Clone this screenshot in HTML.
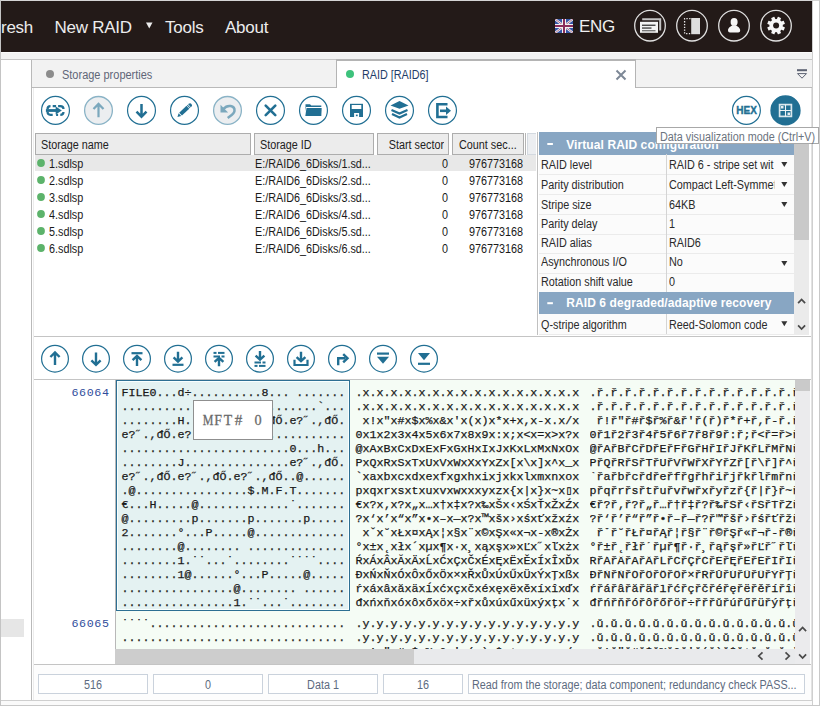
<!DOCTYPE html><html><head><meta charset="utf-8"><style>
html,body{margin:0;padding:0;}
body{width:820px;height:706px;position:relative;overflow:hidden;background:#fff;font-family:"Liberation Sans",sans-serif;}
.t{position:absolute;white-space:pre;line-height:1;}
.r{position:absolute;}
svg{position:absolute;overflow:visible;}
</style></head><body>
<div class="r" style="left:0px;top:0px;width:820px;height:706px;background:#ffffff;"></div>
<div class="r" style="left:1px;top:1px;width:811px;height:51px;background:#231a18;"></div>
<div class="r" style="left:0px;top:0px;width:820px;height:1px;background:#d4d4d4;"></div>
<div class="r" style="left:0px;top:0px;width:1px;height:706px;background:#c4c4c4;"></div>
<div class="r" style="left:1px;top:52px;width:811px;height:7px;background:#f2f2f2;"></div>
<div class="r" style="left:1px;top:52px;width:811px;height:1px;background:#fafafa;"></div>
<div class="r" style="left:1px;top:59px;width:811px;height:1px;background:#c4c4c4;"></div>
<div class="r" style="left:812px;top:0px;width:1px;height:706px;background:#cfcfcf;"></div>
<div class="r" style="left:819px;top:0px;width:1px;height:706px;background:#c8c8c8;"></div>
<div class="t" style="left:1px;top:19.21px;font-size:17px;color:#ececec;font-weight:normal;font-family:'Liberation Sans', sans-serif;letter-spacing:-0.26px;">resh</div>
<div class="t" style="left:54.5px;top:19.21px;font-size:17px;color:#ececec;font-weight:normal;font-family:'Liberation Sans', sans-serif;letter-spacing:-0.26px;">New RAID</div>
<svg style="left:0;top:0" width="820" height="60"><path d="M146,22.5 L152.5,22.5 L149.25,28.5 Z" fill="#ececec"/></svg>
<div class="t" style="left:165px;top:19.21px;font-size:17px;color:#ececec;font-weight:normal;font-family:'Liberation Sans', sans-serif;letter-spacing:-0.26px;">Tools</div>
<div class="t" style="left:225px;top:19.21px;font-size:17px;color:#ececec;font-weight:normal;font-family:'Liberation Sans', sans-serif;letter-spacing:-0.26px;">About</div>
<svg style="left:555px;top:19px;overflow:hidden" width="18" height="14" viewBox="0 0 18 14">
<rect width="18" height="14" fill="#3556a6"/>
<path d="M0,0 L18,14 M18,0 L0,14" stroke="#f2f2f2" stroke-width="2.2"/>
<path d="M0,0 L18,14 M18,0 L0,14" stroke="#8e3a62" stroke-width="0.7"/>
<path d="M9,0 V14 M0,7 H18" stroke="#f2f2f2" stroke-width="4"/>
<path d="M9,0 V14 M0,7 H18" stroke="#8a2d5c" stroke-width="2"/>
</svg>
<div class="t" style="left:579px;top:17.81px;font-size:17px;color:#f0f0f0;font-weight:normal;font-family:'Liberation Sans', sans-serif;letter-spacing:-0.3px;">ENG</div>
<svg style="left:633px;top:9px" width="34" height="34"><circle cx="17" cy="16.7" r="15.3" fill="none" stroke="#e0e0e0" stroke-width="1.3"/></svg>
<svg style="left:675px;top:9px" width="34" height="34"><circle cx="17" cy="16.7" r="15.3" fill="none" stroke="#e0e0e0" stroke-width="1.3"/></svg>
<svg style="left:717px;top:9px" width="34" height="34"><circle cx="17" cy="16.7" r="15.3" fill="none" stroke="#e0e0e0" stroke-width="1.3"/></svg>
<svg style="left:759px;top:9px" width="34" height="34"><circle cx="17" cy="16.7" r="15.3" fill="none" stroke="#e0e0e0" stroke-width="1.3"/></svg>
<svg style="left:634px;top:9px" width="34" height="34">
<path d="M8.2,10.3 H26.2 V21.5" fill="none" stroke="#c4c4c4" stroke-width="2"/>
<rect x="6" y="12.8" width="18" height="11" fill="#f4f4f4"/>
<rect x="8" y="15.6" width="13.5" height="1.3" fill="#3a3a3a"/>
<rect x="8" y="18.4" width="9.5" height="1.3" fill="#3a3a3a"/>
<rect x="8" y="21.2" width="13.5" height="1.1" fill="#5a5a5a"/>
</svg>
<svg style="left:675px;top:9px" width="34" height="34">
<path d="M15.5,9.6 H9.6 V24.6 H15.5" fill="none" stroke="#ececec" stroke-width="1.3" stroke-dasharray="1.3,1.5"/>
<rect x="16.2" y="9" width="8.8" height="16.2" fill="#dedede"/>
</svg>
<svg style="left:717px;top:9px" width="34" height="34">
<ellipse cx="17.1" cy="12.9" rx="3.5" ry="3.9" fill="#f6f6f6"/>
<path d="M11,21.6 C11,18.6 13.6,17.6 15.4,16.2 L18.8,16.2 C20.6,17.6 23.2,18.6 23.2,21.6 Q23.2,23.6 21.2,23.6 H13 Q11,23.6 11,21.6 Z" fill="#f6f6f6"/>
</svg>
<svg style="left:759px;top:9px" width="34" height="34"><g transform="translate(17.1,16.6)"><circle r="6.7" fill="#f6f6f6"/><rect x="-1.75" y="-8.9" width="3.5" height="4" rx="0.4" fill="#f6f6f6" transform="rotate(22.5)"/><rect x="-1.75" y="-8.9" width="3.5" height="4" rx="0.4" fill="#f6f6f6" transform="rotate(67.5)"/><rect x="-1.75" y="-8.9" width="3.5" height="4" rx="0.4" fill="#f6f6f6" transform="rotate(112.5)"/><rect x="-1.75" y="-8.9" width="3.5" height="4" rx="0.4" fill="#f6f6f6" transform="rotate(157.5)"/><rect x="-1.75" y="-8.9" width="3.5" height="4" rx="0.4" fill="#f6f6f6" transform="rotate(202.5)"/><rect x="-1.75" y="-8.9" width="3.5" height="4" rx="0.4" fill="#f6f6f6" transform="rotate(247.5)"/><rect x="-1.75" y="-8.9" width="3.5" height="4" rx="0.4" fill="#f6f6f6" transform="rotate(292.5)"/><rect x="-1.75" y="-8.9" width="3.5" height="4" rx="0.4" fill="#f6f6f6" transform="rotate(337.5)"/><circle r="3.0" fill="#231a18"/></g></svg>
<div class="r" style="left:31px;top:60px;width:1px;height:640px;background:#b9b9b9;"></div>
<div class="r" style="left:33px;top:88px;width:1px;height:612px;background:#ececec;"></div>
<div class="r" style="left:1px;top:619px;width:23px;height:18px;background:#e6e6e6;"></div>
<div class="r" style="left:32px;top:60px;width:780px;height:27px;background:#f2f2f2;"></div>
<div class="r" style="left:32px;top:87px;width:780px;height:1px;background:#b9b9b9;"></div>
<div class="r" style="left:336px;top:59px;width:300px;height:29px;background:#ffffff;"></div>
<div class="r" style="left:336px;top:59px;width:1px;height:29px;background:#b4b4b4;"></div>
<div class="r" style="left:635px;top:59px;width:1px;height:29px;background:#b4b4b4;"></div>
<div class="r" style="left:336px;top:59px;width:300px;height:2px;background:#b4b4b4;"></div>
<svg style="left:0;top:60px" width="820" height="28"><circle cx="50" cy="14" r="4" fill="#8c8c8c"/><circle cx="350" cy="14" r="4" fill="#3dc27c"/><path d="M616.5,10.5 L625.5,19.5 M625.5,10.5 L616.5,19.5" stroke="#7d8896" stroke-width="2"/><rect x="797" y="9.2" width="10" height="2" fill="#5c6272"/><path d="M797.5,13.6 L806.5,13.6 L802,18.2 Z" fill="none" stroke="#5c6272" stroke-width="1"/></svg>
<div class="t" style="top:69.14px;font-size:12px;color:#606678;font-weight:normal;letter-spacing:0px;left:62.3px;transform-origin:0 0;transform:scaleX(0.915);">Storage properties</div>
<div class="t" style="top:69.04px;font-size:12px;color:#1f3d68;font-weight:normal;letter-spacing:0px;left:362.4px;transform-origin:0 0;transform:scaleX(0.9);">RAID [RAID6]</div>
<div class="r" style="left:811px;top:88px;width:1px;height:612px;background:#e2e2e2;"></div>
<svg style="left:0;top:0" width="820" height="706"><circle cx="55.5" cy="110.4" r="13.95" fill="none" stroke="#216f93" stroke-width="1.2"/><circle cx="98.5" cy="110.4" r="13.9" fill="#eceef0" stroke="#8ab3c6" stroke-width="1.3"/><circle cx="141.5" cy="110.4" r="13.95" fill="none" stroke="#216f93" stroke-width="1.2"/><circle cx="184.5" cy="110.4" r="13.95" fill="none" stroke="#216f93" stroke-width="1.2"/><circle cx="227.5" cy="110.4" r="13.9" fill="#eceef0" stroke="#8ab3c6" stroke-width="1.3"/><circle cx="270.5" cy="110.4" r="13.95" fill="none" stroke="#216f93" stroke-width="1.2"/><circle cx="313.5" cy="110.4" r="13.95" fill="none" stroke="#216f93" stroke-width="1.2"/><circle cx="356.5" cy="110.4" r="13.95" fill="none" stroke="#216f93" stroke-width="1.2"/><circle cx="399.5" cy="110.4" r="13.95" fill="none" stroke="#216f93" stroke-width="1.2"/><circle cx="442.5" cy="110.4" r="13.95" fill="none" stroke="#216f93" stroke-width="1.2"/><path d="M47.5,109.2 Q47.5,106.10000000000001 50.5,106.10000000000001 M52.7,106.10000000000001 H56.1 M58.1,106.10000000000001 H60.3 Q63.5,106.10000000000001 63.5,108.9 M63.5,111.9 Q63.5,114.80000000000001 60.3,114.80000000000001 M58.1,114.80000000000001 H56.1 M52.7,114.80000000000001 H50.5 Q47.5,114.80000000000001 47.5,111.80000000000001" fill="none" stroke="#216f93" stroke-width="2.2"/><path d="M45.9,110.5 H57.5" stroke="#216f93" stroke-width="2.8"/><path d="M55.7,106.60000000000001 L61.8,110.5 L55.7,114.4 Z" fill="#216f93"/><path d="M98.5,117.2 V104.2 M93.5,109.10000000000001 L98.5,103.9 L103.5,109.10000000000001" fill="none" stroke="#7ba8bd" stroke-width="2.2"/><path d="M141.5,104.0 V116.4 M136.5,111.7 L141.5,116.7 L146.5,111.7" fill="none" stroke="#216f93" stroke-width="2.5"/><g transform="translate(184.15,110.75) rotate(-43)"><path d="M-9.2,0 L-5.8,-1.9 L-5.8,1.9 Z" fill="#216f93"/><rect x="-4.9" y="-2" width="10" height="4" fill="#216f93"/><rect x="5.7" y="-2" width="1" height="4" fill="#216f93"/><path d="M7.3,-2 H8 A2,2 0 0 1 8,2 H7.3 Z" fill="#216f93"/></g><path d="M223.5,108.9 C227.5,104.10000000000001 235.0,105.4 234.5,110.9 C234.3,113.9 230.5,115.9 227.7,118.0" fill="none" stroke="#7ba8bd" stroke-width="2.5"/><path d="M220.5,104.80000000000001 L220.5,112.5 L228.1,112.5 Z" fill="#7ba8bd"/><path d="M265.7,105.60000000000001 L275.3,115.2 M275.3,105.60000000000001 L265.7,115.2" stroke="#216f93" stroke-width="2.6" stroke-linecap="round"/><path d="M305.5,104.2 H310.0 L311.3,105.60000000000001 H321.3 V107.0 H306.1 L305.5,111.4 Z" fill="#216f93"/><path d="M306.5,108.0 H321.7 L321.3,115.9 H305.3 Z" fill="#216f93"/><path d="M350.0,103.80000000000001 H363.0 V117.0 H350.0 Z" fill="#216f93"/><rect x="351.7" y="105.0" width="9.6" height="4" fill="#fff"/><rect x="354.1" y="113.0" width="5" height="4" fill="#fff"/><rect x="355.9" y="114.60000000000001" width="1.8" height="1.6" fill="#216f93"/><path d="M390.5,105.5 L399.5,101.0 L408.5,105.5 L399.5,108.80000000000001 Z" fill="#216f93"/><path d="M391.5,110.0 L399.5,113.60000000000001 L407.5,110.0" fill="none" stroke="#216f93" stroke-width="2.2"/><path d="M392.0,114.0 L399.5,117.60000000000001 L407.0,114.0" fill="none" stroke="#216f93" stroke-width="2.2"/><path d="M447.5,104.2 H437.4 V117.0 H447.5" fill="none" stroke="#216f93" stroke-width="2.6"/><path d="M440.0,110.80000000000001 H447.5" stroke="#216f93" stroke-width="2.6"/><path d="M446.0,106.60000000000001 L451.0,110.80000000000001 L446.0,115.0 Z" fill="#216f93"/><circle cx="746.4" cy="110.4" r="13.95" fill="none" stroke="#216f93" stroke-width="1.2"/><circle cx="785.5" cy="110.4" r="14.4" fill="#216f93" stroke="#216f93" stroke-width="1.5"/><rect x="779.6" y="104.6" width="11.8" height="11.8" fill="none" stroke="#d9e6ec" stroke-width="1.7"/><path d="M785.5,104.5 V116.5 M779.5,110.5 H791.5" stroke="#eef4f6" stroke-width="1.1"/><rect x="781" y="106" width="2.5" height="2.5" fill="#e6eef2"/><rect x="787.5" y="112.5" width="2.5" height="2.5" fill="#e6eef2"/></svg>
<div class="t" style="left:736.2px;top:106.13px;font-size:10px;color:#216f93;font-weight:bold;font-family:'Liberation Sans', sans-serif;letter-spacing:0.1px;-webkit-text-stroke:0.35px #216f93;">HEX</div>
<div class="r" style="left:35px;top:133px;width:216px;height:22px;background:#ececec;box-sizing:border-box;border:1px solid #adadad;"></div>
<div class="r" style="left:254px;top:133px;width:120px;height:22px;background:#ececec;box-sizing:border-box;border:1px solid #adadad;"></div>
<div class="r" style="left:377px;top:133px;width:72px;height:22px;background:#ececec;box-sizing:border-box;border:1px solid #adadad;"></div>
<div class="r" style="left:452px;top:133px;width:72px;height:22px;background:#ececec;box-sizing:border-box;border:1px solid #adadad;"></div>
<div class="r" style="left:525px;top:133px;width:1px;height:22px;background:#b4b4b4;"></div>
<div class="r" style="left:527px;top:133px;width:9px;height:22px;background:#eceef1;box-sizing:border-box;border:1px solid #d3d9e0;border-right:none;"></div>
<div class="t" style="top:139.04px;font-size:12px;color:#222;font-weight:normal;letter-spacing:0px;left:40.5px;transform-origin:0 0;transform:scaleX(0.9);">Storage name</div>
<div class="t" style="top:139.04px;font-size:12px;color:#222;font-weight:normal;letter-spacing:0px;left:259.5px;transform-origin:0 0;transform:scaleX(0.9);">Storage ID</div>
<div class="t" style="top:139.04px;font-size:12px;color:#222;font-weight:normal;letter-spacing:0px;left:43.5px;width:400px;text-align:right;transform-origin:100% 0;transform:scaleX(0.9);">Start sector</div>
<div class="t" style="top:139.04px;font-size:12px;color:#222;font-weight:normal;letter-spacing:0px;left:458.5px;transform-origin:0 0;transform:scaleX(0.9);">Count sec...</div>
<div class="r" style="left:35px;top:155px;width:501px;height:16px;background:#e8e8e8;"></div>
<div class="t" style="top:158.24px;font-size:12px;color:#1a1a1a;font-weight:normal;letter-spacing:0px;left:49.4px;transform-origin:0 0;transform:scaleX(0.9);">1.sdlsp</div>
<div class="t" style="top:158.24px;font-size:12px;color:#1a1a1a;font-weight:normal;letter-spacing:0px;left:255.4px;transform-origin:0 0;transform:scaleX(0.9);">E:/RAID6_6Disks/1.sd...</div>
<div class="t" style="top:158.24px;font-size:12px;color:#1a1a1a;font-weight:normal;letter-spacing:0px;left:47.5px;width:400px;text-align:right;transform-origin:100% 0;transform:scaleX(0.9);">0</div>
<div class="t" style="top:158.24px;font-size:12px;color:#1a1a1a;font-weight:normal;letter-spacing:0px;left:122.5px;width:400px;text-align:right;transform-origin:100% 0;transform:scaleX(0.9);">976773168</div>
<div class="t" style="top:175.24px;font-size:12px;color:#1a1a1a;font-weight:normal;letter-spacing:0px;left:49.4px;transform-origin:0 0;transform:scaleX(0.9);">2.sdlsp</div>
<div class="t" style="top:175.24px;font-size:12px;color:#1a1a1a;font-weight:normal;letter-spacing:0px;left:255.4px;transform-origin:0 0;transform:scaleX(0.9);">E:/RAID6_6Disks/2.sd...</div>
<div class="t" style="top:175.24px;font-size:12px;color:#1a1a1a;font-weight:normal;letter-spacing:0px;left:47.5px;width:400px;text-align:right;transform-origin:100% 0;transform:scaleX(0.9);">0</div>
<div class="t" style="top:175.24px;font-size:12px;color:#1a1a1a;font-weight:normal;letter-spacing:0px;left:122.5px;width:400px;text-align:right;transform-origin:100% 0;transform:scaleX(0.9);">976773168</div>
<div class="t" style="top:192.24px;font-size:12px;color:#1a1a1a;font-weight:normal;letter-spacing:0px;left:49.4px;transform-origin:0 0;transform:scaleX(0.9);">3.sdlsp</div>
<div class="t" style="top:192.24px;font-size:12px;color:#1a1a1a;font-weight:normal;letter-spacing:0px;left:255.4px;transform-origin:0 0;transform:scaleX(0.9);">E:/RAID6_6Disks/3.sd...</div>
<div class="t" style="top:192.24px;font-size:12px;color:#1a1a1a;font-weight:normal;letter-spacing:0px;left:47.5px;width:400px;text-align:right;transform-origin:100% 0;transform:scaleX(0.9);">0</div>
<div class="t" style="top:192.24px;font-size:12px;color:#1a1a1a;font-weight:normal;letter-spacing:0px;left:122.5px;width:400px;text-align:right;transform-origin:100% 0;transform:scaleX(0.9);">976773168</div>
<div class="t" style="top:209.24px;font-size:12px;color:#1a1a1a;font-weight:normal;letter-spacing:0px;left:49.4px;transform-origin:0 0;transform:scaleX(0.9);">4.sdlsp</div>
<div class="t" style="top:209.24px;font-size:12px;color:#1a1a1a;font-weight:normal;letter-spacing:0px;left:255.4px;transform-origin:0 0;transform:scaleX(0.9);">E:/RAID6_6Disks/4.sd...</div>
<div class="t" style="top:209.24px;font-size:12px;color:#1a1a1a;font-weight:normal;letter-spacing:0px;left:47.5px;width:400px;text-align:right;transform-origin:100% 0;transform:scaleX(0.9);">0</div>
<div class="t" style="top:209.24px;font-size:12px;color:#1a1a1a;font-weight:normal;letter-spacing:0px;left:122.5px;width:400px;text-align:right;transform-origin:100% 0;transform:scaleX(0.9);">976773168</div>
<div class="t" style="top:226.24px;font-size:12px;color:#1a1a1a;font-weight:normal;letter-spacing:0px;left:49.4px;transform-origin:0 0;transform:scaleX(0.9);">5.sdlsp</div>
<div class="t" style="top:226.24px;font-size:12px;color:#1a1a1a;font-weight:normal;letter-spacing:0px;left:255.4px;transform-origin:0 0;transform:scaleX(0.9);">E:/RAID6_6Disks/5.sd...</div>
<div class="t" style="top:226.24px;font-size:12px;color:#1a1a1a;font-weight:normal;letter-spacing:0px;left:47.5px;width:400px;text-align:right;transform-origin:100% 0;transform:scaleX(0.9);">0</div>
<div class="t" style="top:226.24px;font-size:12px;color:#1a1a1a;font-weight:normal;letter-spacing:0px;left:122.5px;width:400px;text-align:right;transform-origin:100% 0;transform:scaleX(0.9);">976773168</div>
<div class="t" style="top:243.24px;font-size:12px;color:#1a1a1a;font-weight:normal;letter-spacing:0px;left:49.4px;transform-origin:0 0;transform:scaleX(0.9);">6.sdlsp</div>
<div class="t" style="top:243.24px;font-size:12px;color:#1a1a1a;font-weight:normal;letter-spacing:0px;left:255.4px;transform-origin:0 0;transform:scaleX(0.9);">E:/RAID6_6Disks/6.sd...</div>
<div class="t" style="top:243.24px;font-size:12px;color:#1a1a1a;font-weight:normal;letter-spacing:0px;left:47.5px;width:400px;text-align:right;transform-origin:100% 0;transform:scaleX(0.9);">0</div>
<div class="t" style="top:243.24px;font-size:12px;color:#1a1a1a;font-weight:normal;letter-spacing:0px;left:122.5px;width:400px;text-align:right;transform-origin:100% 0;transform:scaleX(0.9);">976773168</div>
<svg style="left:0;top:0" width="820" height="706"><circle cx="41" cy="163" r="3.9" fill="#5cb36b"/><circle cx="41" cy="180" r="3.9" fill="#5cb36b"/><circle cx="41" cy="197" r="3.9" fill="#5cb36b"/><circle cx="41" cy="214" r="3.9" fill="#5cb36b"/><circle cx="41" cy="231" r="3.9" fill="#5cb36b"/><circle cx="41" cy="248" r="3.9" fill="#5cb36b"/></svg>
<div class="r" style="left:537px;top:132px;width:1px;height:203px;background:#c0c0c0;"></div>
<div class="r" style="left:539px;top:154px;width:255px;height:180px;background:#fbfbfb;"></div>
<div class="r" style="left:539px;top:132px;width:255px;height:23px;background:#88a6c3;"></div>
<div class="r" style="left:539px;top:292px;width:255px;height:22px;background:#88a6c3;"></div>
<div class="t" style="top:158.94px;font-size:12px;color:#2a2a2a;font-weight:normal;letter-spacing:0px;left:541.3px;transform-origin:0 0;transform:scaleX(0.9);">RAID level</div>
<div class="t" style="top:158.94px;font-size:12px;color:#2a2a2a;font-weight:normal;letter-spacing:0px;left:669.4px;transform-origin:0 0;transform:scaleX(0.9);width:116.67px;overflow:hidden;">RAID 6 - stripe set wit</div>
<svg style="left:0;top:0" width="820" height="706"><path d="M781.3,162 H787.3 L784.3,167 Z" fill="#333"/></svg>
<div class="r" style="left:539px;top:174px;width:255px;height:1px;background:#ebebeb;"></div>
<div class="t" style="top:178.54px;font-size:12px;color:#2a2a2a;font-weight:normal;letter-spacing:0px;left:541.3px;transform-origin:0 0;transform:scaleX(0.9);">Parity distribution</div>
<div class="t" style="top:178.54px;font-size:12px;color:#2a2a2a;font-weight:normal;letter-spacing:0px;left:669.4px;transform-origin:0 0;transform:scaleX(0.9);width:116.67px;overflow:hidden;">Compact Left-Symmet</div>
<svg style="left:0;top:0" width="820" height="706"><path d="M781.3,182 H787.3 L784.3,187 Z" fill="#333"/></svg>
<div class="r" style="left:539px;top:194px;width:255px;height:1px;background:#ebebeb;"></div>
<div class="t" style="top:198.64px;font-size:12px;color:#2a2a2a;font-weight:normal;letter-spacing:0px;left:541.3px;transform-origin:0 0;transform:scaleX(0.9);">Stripe size</div>
<div class="t" style="top:198.64px;font-size:12px;color:#2a2a2a;font-weight:normal;letter-spacing:0px;left:669.4px;transform-origin:0 0;transform:scaleX(0.9);width:116.67px;overflow:hidden;">64KB</div>
<svg style="left:0;top:0" width="820" height="706"><path d="M781.3,202 H787.3 L784.3,207 Z" fill="#333"/></svg>
<div class="r" style="left:539px;top:214px;width:255px;height:1px;background:#ebebeb;"></div>
<div class="t" style="top:217.64px;font-size:12px;color:#2a2a2a;font-weight:normal;letter-spacing:0px;left:541.3px;transform-origin:0 0;transform:scaleX(0.9);">Parity delay</div>
<div class="t" style="top:217.64px;font-size:12px;color:#2a2a2a;font-weight:normal;letter-spacing:0px;left:669.4px;transform-origin:0 0;transform:scaleX(0.9);width:116.67px;overflow:hidden;">1</div>
<div class="r" style="left:539px;top:233.5px;width:255px;height:1px;background:#ebebeb;"></div>
<div class="t" style="top:236.94px;font-size:12px;color:#2a2a2a;font-weight:normal;letter-spacing:0px;left:541.3px;transform-origin:0 0;transform:scaleX(0.9);">RAID alias</div>
<div class="t" style="top:236.94px;font-size:12px;color:#2a2a2a;font-weight:normal;letter-spacing:0px;left:669.4px;transform-origin:0 0;transform:scaleX(0.9);width:116.67px;overflow:hidden;">RAID6</div>
<div class="r" style="left:539px;top:253px;width:255px;height:1px;background:#ebebeb;"></div>
<div class="t" style="top:256.14px;font-size:12px;color:#2a2a2a;font-weight:normal;letter-spacing:0px;left:541.3px;transform-origin:0 0;transform:scaleX(0.9);">Asynchronous I/O</div>
<div class="t" style="top:256.14px;font-size:12px;color:#2a2a2a;font-weight:normal;letter-spacing:0px;left:669.4px;transform-origin:0 0;transform:scaleX(0.9);width:116.67px;overflow:hidden;">No</div>
<svg style="left:0;top:0" width="820" height="706"><path d="M781.3,261 H787.3 L784.3,266 Z" fill="#333"/></svg>
<div class="r" style="left:539px;top:272.5px;width:255px;height:1px;background:#ebebeb;"></div>
<div class="t" style="top:275.64px;font-size:12px;color:#2a2a2a;font-weight:normal;letter-spacing:0px;left:541.3px;transform-origin:0 0;transform:scaleX(0.9);">Rotation shift value</div>
<div class="t" style="top:275.64px;font-size:12px;color:#2a2a2a;font-weight:normal;letter-spacing:0px;left:669.4px;transform-origin:0 0;transform:scaleX(0.9);width:116.67px;overflow:hidden;">0</div>
<div class="r" style="left:539px;top:333.5px;width:255px;height:1px;background:#ebebeb;"></div>
<div class="r" style="left:666px;top:154px;width:1px;height:138px;background:#d4d4d4;"></div>
<div class="r" style="left:666px;top:314px;width:1px;height:20px;background:#d4d4d4;"></div>
<div class="t" style="top:318.54px;font-size:12px;color:#2a2a2a;font-weight:normal;letter-spacing:0px;left:541.3px;transform-origin:0 0;transform:scaleX(0.9);">Q-stripe algorithm</div>
<div class="t" style="top:318.54px;font-size:12px;color:#2a2a2a;font-weight:normal;letter-spacing:0px;left:669.4px;transform-origin:0 0;transform:scaleX(0.9);">Reed-Solomon code</div>
<svg style="left:0;top:0" width="820" height="706"><path d="M781.3,321.3 H787.3 L784.3,326.3 Z" fill="#333"/></svg>
<svg style="left:0;top:0" width="820" height="706"><rect x="547.3" y="143" width="5.6" height="2" fill="#fff"/><rect x="547.3" y="302.2" width="5.6" height="2" fill="#fff"/></svg>
<div class="t" style="top:138.94px;font-size:12px;color:#ffffff;font-weight:bold;letter-spacing:0.1px;left:566.2px;transform-origin:0 0;transform:scaleX(1.0);">Virtual RAID configuration</div>
<div class="t" style="top:297.04px;font-size:12px;color:#ffffff;font-weight:bold;letter-spacing:0.1px;left:566.2px;transform-origin:0 0;transform:scaleX(1.0);">RAID 6 degraded/adaptive recovery</div>
<div class="r" style="left:794px;top:132px;width:15px;height:202.5px;background:#ebebeb;"></div>
<div class="r" style="left:794px;top:132px;width:15px;height:107.5px;background:#c9c9c9;"></div>
<svg style="left:0;top:0" width="820" height="706"><path d="M798.1,303.2 L801.6,299.4 L805.1,303.2 M798.1,325.3 L801.6,329.1 L805.1,325.3" fill="none" stroke="#4a4a4a" stroke-width="1.7"/></svg>
<div class="r" style="left:34px;top:336px;width:777px;height:1px;background:#c4c4c4;"></div>
<svg style="left:0;top:0" width="820" height="706"><circle cx="55" cy="358.7" r="13.4" fill="none" stroke="#216f93" stroke-width="1.2"/><circle cx="96" cy="358.7" r="13.4" fill="none" stroke="#216f93" stroke-width="1.2"/><circle cx="137" cy="358.7" r="13.4" fill="none" stroke="#216f93" stroke-width="1.2"/><circle cx="178" cy="358.7" r="13.4" fill="none" stroke="#216f93" stroke-width="1.2"/><circle cx="219" cy="358.7" r="13.4" fill="none" stroke="#216f93" stroke-width="1.2"/><circle cx="260" cy="358.7" r="13.4" fill="none" stroke="#216f93" stroke-width="1.2"/><circle cx="301" cy="358.7" r="13.4" fill="none" stroke="#216f93" stroke-width="1.2"/><circle cx="342" cy="358.7" r="13.4" fill="none" stroke="#216f93" stroke-width="1.2"/><circle cx="383" cy="358.7" r="13.4" fill="none" stroke="#216f93" stroke-width="1.2"/><circle cx="424" cy="358.7" r="13.4" fill="none" stroke="#216f93" stroke-width="1.2"/><path d="M55,364.9 V353.4 M50.4,357.0 L55,352.4 L59.6,357.0" fill="none" stroke="#216f93" stroke-width="2.4"/><path d="M96,352.4 V363.9 M91.4,360.29999999999995 L96,364.9 L100.6,360.29999999999995" fill="none" stroke="#216f93" stroke-width="2.4"/><rect x="131.5" y="352.09999999999997" width="11" height="2.2" fill="#216f93"/><path d="M137,366.0 V356.9 M132.6,360.09999999999997 L137,355.9 L141.4,360.09999999999997" fill="none" stroke="#216f93" stroke-width="2.4"/><path d="M178,351.7 V360.5 M173.6,357.3 L178,361.5 L182.4,357.3" fill="none" stroke="#216f93" stroke-width="2.4"/><rect x="172.5" y="363.7" width="11" height="2.2" fill="#216f93"/><rect x="213.5" y="351.9" width="3" height="2" fill="#216f93"/><rect x="218" y="351.9" width="6.5" height="2" fill="#216f93"/><rect x="213.5" y="355.5" width="6.5" height="2" fill="#216f93"/><rect x="221.5" y="355.5" width="3" height="2" fill="#216f93"/><path d="M219,366.3 V358.9 M214.6,361.9 L219,357.9 L223.4,361.9" fill="none" stroke="#216f93" stroke-width="2.4"/><path d="M260,350.9 V358.7 M255.6,355.7 L260,359.7 L264.4,355.7" fill="none" stroke="#216f93" stroke-width="2.4"/><rect x="254.5" y="361.5" width="6.5" height="2" fill="#216f93"/><rect x="262.5" y="361.5" width="3" height="2" fill="#216f93"/><rect x="254.5" y="364.9" width="3" height="2" fill="#216f93"/><rect x="259" y="364.9" width="6.5" height="2" fill="#216f93"/><path d="M301,351.7 V360.2 M296.6,357.2 L301,361.2 L305.4,357.2" fill="none" stroke="#216f93" stroke-width="2.4"/><path d="M294.5,359.7 V365.0 H307.5 V359.7" fill="none" stroke="#216f93" stroke-width="2.2"/><path d="M338.2,365.2 V358.2 H345.5" fill="none" stroke="#216f93" stroke-width="2.4"/><path d="M343.2,354.09999999999997 L347.5,358.2 L343.2,362.3" fill="none" stroke="#216f93" stroke-width="2.4"/><rect x="377" y="352.5" width="12" height="2.2" fill="#216f93"/><path d="M377,356.7 H389 L383,363.7 Z" fill="#216f93"/><path d="M418,353.09999999999997 H430 L424,360.3 Z" fill="#216f93"/><rect x="418" y="362.7" width="12" height="2.2" fill="#216f93"/></svg>
<div class="r" style="left:34px;top:379px;width:777px;height:1px;background:#c4c4c4;"></div>
<div class="r" style="left:115px;top:380px;width:680px;height:269px;background:#f5fcf5;"></div>
<div class="r" style="left:115px;top:380px;width:1px;height:269px;background:#b8b8b8;"></div>
<div class="r" style="left:116px;top:380px;width:234px;height:231px;background:#e4f2f2;box-sizing:border-box;border:1px solid #2d6f93;box-shadow:inset 1px 1px 0 #f8ffff, inset -1px -1px 0 #f8ffff;"></div>
<div class="t" style="left:121.5px;top:387.55px;font-size:11.67px;color:#1a1a1a;font-family:'Liberation Mono', monospace;font-weight:normal;-webkit-text-stroke:0.25px #1a1a1a;">FILE0...d÷..........8... .......</div>
<div class="t" style="left:355.5px;top:387.55px;font-size:11.67px;color:#1a1a1a;font-family:'Liberation Mono', monospace;font-weight:normal;-webkit-text-stroke:0.25px #1a1a1a;">.x.x.x.x.x.x.x.x.x.x.x.x.x.x.x.x</div>
<div class="t" style="left:589.5px;top:387.55px;font-size:11.67px;color:#1a1a1a;font-family:'Liberation Mono', monospace;font-weight:normal;-webkit-text-stroke:0.25px #1a1a1a;width:205.5px;overflow:hidden;">.ř.ř.ř.ř.ř.ř.ř.ř.ř.ř.ř.ř.ř.ř.ř.ř</div>
<div class="t" style="left:121.5px;top:401.55px;font-size:11.67px;color:#1a1a1a;font-family:'Liberation Mono', monospace;font-weight:normal;-webkit-text-stroke:0.25px #1a1a1a;">............................`...</div>
<div class="t" style="left:355.5px;top:401.55px;font-size:11.67px;color:#1a1a1a;font-family:'Liberation Mono', monospace;font-weight:normal;-webkit-text-stroke:0.25px #1a1a1a;">.x.x.x.x.x.x.x.x.x.x.x.x.x.x.x.x</div>
<div class="t" style="left:589.5px;top:401.55px;font-size:11.67px;color:#1a1a1a;font-family:'Liberation Mono', monospace;font-weight:normal;-webkit-text-stroke:0.25px #1a1a1a;width:205.5px;overflow:hidden;">.ř.ř.ř.ř.ř.ř.ř.ř.ř.ř.ř.ř.ř.ř.ř.ř</div>
<div class="t" style="left:121.5px;top:415.55px;font-size:11.67px;color:#1a1a1a;font-family:'Liberation Mono', monospace;font-weight:normal;-webkit-text-stroke:0.25px #1a1a1a;">........H............đŐ.e?˝.,đŐ.</div>
<div class="t" style="left:355.5px;top:415.55px;font-size:11.67px;color:#1a1a1a;font-family:'Liberation Mono', monospace;font-weight:normal;-webkit-text-stroke:0.25px #1a1a1a;"> x!x&quot;x#x$x%x&amp;x&#x27;x(x)x*x+x,x-x.x/x</div>
<div class="t" style="left:589.5px;top:415.55px;font-size:11.67px;color:#1a1a1a;font-family:'Liberation Mono', monospace;font-weight:normal;-webkit-text-stroke:0.25px #1a1a1a;width:205.5px;overflow:hidden;"> ř!ř&quot;ř#ř$ř%ř&amp;ř&#x27;ř(ř)ř*ř+ř,ř-ř.ř/ř</div>
<div class="t" style="left:121.5px;top:429.55px;font-size:11.67px;color:#1a1a1a;font-family:'Liberation Mono', monospace;font-weight:normal;-webkit-text-stroke:0.25px #1a1a1a;">e?˝.,đŐ.e?......................</div>
<div class="t" style="left:355.5px;top:429.55px;font-size:11.67px;color:#1a1a1a;font-family:'Liberation Mono', monospace;font-weight:normal;-webkit-text-stroke:0.25px #1a1a1a;">0x1x2x3x4x5x6x7x8x9x:x;x&lt;x=x&gt;x?x</div>
<div class="t" style="left:589.5px;top:429.55px;font-size:11.67px;color:#1a1a1a;font-family:'Liberation Mono', monospace;font-weight:normal;-webkit-text-stroke:0.25px #1a1a1a;width:205.5px;overflow:hidden;">0ř1ř2ř3ř4ř5ř6ř7ř8ř9ř:ř;ř&lt;ř=ř&gt;ř?ř</div>
<div class="t" style="left:121.5px;top:443.55px;font-size:11.67px;color:#1a1a1a;font-family:'Liberation Mono', monospace;font-weight:normal;-webkit-text-stroke:0.25px #1a1a1a;">........................0...h...</div>
<div class="t" style="left:355.5px;top:443.55px;font-size:11.67px;color:#1a1a1a;font-family:'Liberation Mono', monospace;font-weight:normal;-webkit-text-stroke:0.25px #1a1a1a;">@xAxBxCxDxExFxGxHxIxJxKxLxMxNxOx</div>
<div class="t" style="left:589.5px;top:443.55px;font-size:11.67px;color:#1a1a1a;font-family:'Liberation Mono', monospace;font-weight:normal;-webkit-text-stroke:0.25px #1a1a1a;width:205.5px;overflow:hidden;">@řAřBřCřDřEřFřGřHřIřJřKřLřMřNřOř</div>
<div class="t" style="left:121.5px;top:457.55px;font-size:11.67px;color:#1a1a1a;font-family:'Liberation Mono', monospace;font-weight:normal;-webkit-text-stroke:0.25px #1a1a1a;">........J...............e?˝.,đŐ.</div>
<div class="t" style="left:355.5px;top:457.55px;font-size:11.67px;color:#1a1a1a;font-family:'Liberation Mono', monospace;font-weight:normal;-webkit-text-stroke:0.25px #1a1a1a;">PxQxRxSxTxUxVxWxXxYxZx[x\x]x^x_x</div>
<div class="t" style="left:589.5px;top:457.55px;font-size:11.67px;color:#1a1a1a;font-family:'Liberation Mono', monospace;font-weight:normal;-webkit-text-stroke:0.25px #1a1a1a;width:205.5px;overflow:hidden;">PřQřRřSřTřUřVřWřXřYřZř[ř\ř]ř^ř_ř</div>
<div class="t" style="left:121.5px;top:471.55px;font-size:11.67px;color:#1a1a1a;font-family:'Liberation Mono', monospace;font-weight:normal;-webkit-text-stroke:0.25px #1a1a1a;">e?˝.,đŐ.e?˝.,đŐ.e?˝.,đŐ..@......</div>
<div class="t" style="left:355.5px;top:471.55px;font-size:11.67px;color:#1a1a1a;font-family:'Liberation Mono', monospace;font-weight:normal;-webkit-text-stroke:0.25px #1a1a1a;">`xaxbxcxdxexfxgxhxixjxkxlxmxnxox</div>
<div class="t" style="left:589.5px;top:471.55px;font-size:11.67px;color:#1a1a1a;font-family:'Liberation Mono', monospace;font-weight:normal;-webkit-text-stroke:0.25px #1a1a1a;width:205.5px;overflow:hidden;">`řařbřcřdřeřfřgřhřiřjřkřlřmřnřoř</div>
<div class="t" style="left:121.5px;top:485.55px;font-size:11.67px;color:#1a1a1a;font-family:'Liberation Mono', monospace;font-weight:normal;-webkit-text-stroke:0.25px #1a1a1a;">.@................$.M.F.T.......</div>
<div class="t" style="left:355.5px;top:485.55px;font-size:11.67px;color:#1a1a1a;font-family:'Liberation Mono', monospace;font-weight:normal;-webkit-text-stroke:0.25px #1a1a1a;">pxqxrxsxtxuxvxwxxxyxzx{x|x}x~x▯x</div>
<div class="t" style="left:589.5px;top:485.55px;font-size:11.67px;color:#1a1a1a;font-family:'Liberation Mono', monospace;font-weight:normal;-webkit-text-stroke:0.25px #1a1a1a;width:205.5px;overflow:hidden;">přqřrřsřtřuřvřwřxřyřzř{ř|ř}ř~ř▯ř</div>
<div class="t" style="left:121.5px;top:499.55px;font-size:11.67px;color:#1a1a1a;font-family:'Liberation Mono', monospace;font-weight:normal;-webkit-text-stroke:0.25px #1a1a1a;">€...H.....@.............˙.......</div>
<div class="t" style="left:355.5px;top:499.55px;font-size:11.67px;color:#1a1a1a;font-family:'Liberation Mono', monospace;font-weight:normal;-webkit-text-stroke:0.25px #1a1a1a;">€x?x‚x?x„x…x†x‡x?x‰xŠx‹xŚxŤxŽxŹx</div>
<div class="t" style="left:589.5px;top:499.55px;font-size:11.67px;color:#1a1a1a;font-family:'Liberation Mono', monospace;font-weight:normal;-webkit-text-stroke:0.25px #1a1a1a;width:205.5px;overflow:hidden;">€ř?ř‚ř?ř„ř…ř†ř‡ř?ř‰řŠř‹řŚřŤřŽřŹř</div>
<div class="t" style="left:121.5px;top:513.55px;font-size:11.67px;color:#1a1a1a;font-family:'Liberation Mono', monospace;font-weight:normal;-webkit-text-stroke:0.25px #1a1a1a;">@.........p.......p.......p.....</div>
<div class="t" style="left:355.5px;top:513.55px;font-size:11.67px;color:#1a1a1a;font-family:'Liberation Mono', monospace;font-weight:normal;-webkit-text-stroke:0.25px #1a1a1a;">?x‘x’x“x”x•x–x—x?x™xšx›xśxťxžxźx</div>
<div class="t" style="left:589.5px;top:513.55px;font-size:11.67px;color:#1a1a1a;font-family:'Liberation Mono', monospace;font-weight:normal;-webkit-text-stroke:0.25px #1a1a1a;width:205.5px;overflow:hidden;">?ř‘ř’ř“ř”ř•ř–ř—ř?ř™řšř›řśřťřžřźř</div>
<div class="t" style="left:121.5px;top:527.55px;font-size:11.67px;color:#1a1a1a;font-family:'Liberation Mono', monospace;font-weight:normal;-webkit-text-stroke:0.25px #1a1a1a;">2.......°...P.....@.............</div>
<div class="t" style="left:355.5px;top:527.55px;font-size:11.67px;color:#1a1a1a;font-family:'Liberation Mono', monospace;font-weight:normal;-webkit-text-stroke:0.25px #1a1a1a;"> xˇx˘xŁx¤xĄx¦x§x¨x©xŞx«x¬x-x®xŻx</div>
<div class="t" style="left:589.5px;top:527.55px;font-size:11.67px;color:#1a1a1a;font-family:'Liberation Mono', monospace;font-weight:normal;-webkit-text-stroke:0.25px #1a1a1a;width:205.5px;overflow:hidden;"> řˇř˘řŁř¤řĄř¦ř§ř¨ř©řŞř«ř¬ř-ř®řŻř</div>
<div class="t" style="left:121.5px;top:541.55px;font-size:11.67px;color:#1a1a1a;font-family:'Liberation Mono', monospace;font-weight:normal;-webkit-text-stroke:0.25px #1a1a1a;">........@........ ..............</div>
<div class="t" style="left:355.5px;top:541.55px;font-size:11.67px;color:#1a1a1a;font-family:'Liberation Mono', monospace;font-weight:normal;-webkit-text-stroke:0.25px #1a1a1a;">°x±x˛xłx´xµx¶x·x¸xąxşx»xĽx˝xľxżx</div>
<div class="t" style="left:589.5px;top:541.55px;font-size:11.67px;color:#1a1a1a;font-family:'Liberation Mono', monospace;font-weight:normal;-webkit-text-stroke:0.25px #1a1a1a;width:205.5px;overflow:hidden;">°ř±ř˛řłř´řµř¶ř·ř¸řąřşř»řĽř˝řľřżř</div>
<div class="t" style="left:121.5px;top:555.55px;font-size:11.67px;color:#1a1a1a;font-family:'Liberation Mono', monospace;font-weight:normal;-webkit-text-stroke:0.25px #1a1a1a;">........1.˙˙...˙........˙˙˙˙....</div>
<div class="t" style="left:355.5px;top:555.55px;font-size:11.67px;color:#1a1a1a;font-family:'Liberation Mono', monospace;font-weight:normal;-webkit-text-stroke:0.25px #1a1a1a;">ŔxÁxÂxĂxÄxĹxĆxÇxČxÉxĘxËxĚxÍxÎxĎx</div>
<div class="t" style="left:589.5px;top:555.55px;font-size:11.67px;color:#1a1a1a;font-family:'Liberation Mono', monospace;font-weight:normal;-webkit-text-stroke:0.25px #1a1a1a;width:205.5px;overflow:hidden;">ŔřÁřÂřĂřÄřĹřĆřÇřČřÉřĘřËřĚřÍřÎřĎř</div>
<div class="t" style="left:121.5px;top:569.55px;font-size:11.67px;color:#1a1a1a;font-family:'Liberation Mono', monospace;font-weight:normal;-webkit-text-stroke:0.25px #1a1a1a;">........1@......°...P.....@.....</div>
<div class="t" style="left:355.5px;top:569.55px;font-size:11.67px;color:#1a1a1a;font-family:'Liberation Mono', monospace;font-weight:normal;-webkit-text-stroke:0.25px #1a1a1a;">ĐxŃxŇxÓxÔxŐxÖx×xŘxŮxÚxŰxÜxÝxŢxßx</div>
<div class="t" style="left:589.5px;top:569.55px;font-size:11.67px;color:#1a1a1a;font-family:'Liberation Mono', monospace;font-weight:normal;-webkit-text-stroke:0.25px #1a1a1a;width:205.5px;overflow:hidden;">ĐřŃřŇřÓřÔřŐřÖř×řŘřŮřÚřŰřÜřÝřŢřßř</div>
<div class="t" style="left:121.5px;top:583.55px;font-size:11.67px;color:#1a1a1a;font-family:'Liberation Mono', monospace;font-weight:normal;-webkit-text-stroke:0.25px #1a1a1a;">................@........ ......</div>
<div class="t" style="left:355.5px;top:583.55px;font-size:11.67px;color:#1a1a1a;font-family:'Liberation Mono', monospace;font-weight:normal;-webkit-text-stroke:0.25px #1a1a1a;">ŕxáxâxăxäxĺxćxçxčxéxęxëxěxíxîxďx</div>
<div class="t" style="left:589.5px;top:583.55px;font-size:11.67px;color:#1a1a1a;font-family:'Liberation Mono', monospace;font-weight:normal;-webkit-text-stroke:0.25px #1a1a1a;width:205.5px;overflow:hidden;">ŕřářâřăřäřĺřćřçřčřéřęřëřěřířîřďř</div>
<div class="t" style="left:121.5px;top:597.55px;font-size:11.67px;color:#1a1a1a;font-family:'Liberation Mono', monospace;font-weight:normal;-webkit-text-stroke:0.25px #1a1a1a;">................1.˙˙...˙........</div>
<div class="t" style="left:355.5px;top:597.55px;font-size:11.67px;color:#1a1a1a;font-family:'Liberation Mono', monospace;font-weight:normal;-webkit-text-stroke:0.25px #1a1a1a;">đxńxňxóxôxőxöx÷xřxůxúxűxüxýxţx˙x</div>
<div class="t" style="left:589.5px;top:597.55px;font-size:11.67px;color:#1a1a1a;font-family:'Liberation Mono', monospace;font-weight:normal;-webkit-text-stroke:0.25px #1a1a1a;width:205.5px;overflow:hidden;">đřńřňřóřôřőřöř÷řřřůřúřűřüřýřţř˙ř</div>
<div class="t" style="left:121.5px;top:618.75px;font-size:11.67px;color:#1a1a1a;font-family:'Liberation Mono', monospace;font-weight:normal;-webkit-text-stroke:0.25px #1a1a1a;">˙˙˙˙............................</div>
<div class="t" style="left:355.5px;top:618.75px;font-size:11.67px;color:#1a1a1a;font-family:'Liberation Mono', monospace;font-weight:normal;-webkit-text-stroke:0.25px #1a1a1a;">.y.y.y.y.y.y.y.y.y.y.y.y.y.y.y.y</div>
<div class="t" style="left:589.5px;top:618.75px;font-size:11.67px;color:#1a1a1a;font-family:'Liberation Mono', monospace;font-weight:normal;-webkit-text-stroke:0.25px #1a1a1a;width:205.5px;overflow:hidden;">.ů.ů.ů.ů.ů.ů.ů.ů.ů.ů.ů.ů.ů.ů.ů.ů</div>
<div class="t" style="left:121.5px;top:632.75px;font-size:11.67px;color:#1a1a1a;font-family:'Liberation Mono', monospace;font-weight:normal;-webkit-text-stroke:0.25px #1a1a1a;">................................</div>
<div class="t" style="left:355.5px;top:632.75px;font-size:11.67px;color:#1a1a1a;font-family:'Liberation Mono', monospace;font-weight:normal;-webkit-text-stroke:0.25px #1a1a1a;">.y.y.y.y.y.y.y.y.y.y.y.y.y.y.y.y</div>
<div class="t" style="left:589.5px;top:632.75px;font-size:11.67px;color:#1a1a1a;font-family:'Liberation Mono', monospace;font-weight:normal;-webkit-text-stroke:0.25px #1a1a1a;width:205.5px;overflow:hidden;">.ů.ů.ů.ů.ů.ů.ů.ů.ů.ů.ů.ů.ů.ů.ů.ů</div>
<div class="t" style="left:121.5px;top:646.75px;font-size:11.67px;color:#1a1a1a;font-family:'Liberation Mono', monospace;font-weight:normal;-webkit-text-stroke:0.25px #1a1a1a;">................................</div>
<div class="t" style="left:355.5px;top:646.75px;font-size:11.67px;color:#1a1a1a;font-family:'Liberation Mono', monospace;font-weight:normal;-webkit-text-stroke:0.25px #1a1a1a;"> y!y&quot;y#y$y%y&amp;y&#x27;y(y)y*y+y,y-y.y/y</div>
<div class="t" style="left:589.5px;top:646.75px;font-size:11.67px;color:#1a1a1a;font-family:'Liberation Mono', monospace;font-weight:normal;-webkit-text-stroke:0.25px #1a1a1a;width:205.5px;overflow:hidden;"> ů!ů&quot;ů#ů$ů%ů&amp;ů&#x27;ů(ů)ů*ů+ů,ů-ů.ů/ů</div>
<div class="t" style="left:71.5px;top:388.05px;font-size:11.67px;color:#2f4d9c;font-weight:normal;font-family:'Liberation Mono', monospace;letter-spacing:0.6px;">66064</div>
<div class="t" style="left:71.5px;top:618.85px;font-size:11.67px;color:#2f4d9c;font-weight:normal;font-family:'Liberation Mono', monospace;letter-spacing:0.6px;">66065</div>
<div class="r" style="left:193px;top:400px;width:80px;height:40px;background:#ffffff;box-sizing:border-box;border:1px solid #8f8f8f;"></div>
<div class="t" style="left:187.6px;width:40px;text-align:center;top:412.94px;font-size:15px;color:#6a6a6a;font-family:'Liberation Serif',serif;transform:scaleX(0.8);-webkit-text-stroke:0.3px #6a6a6a;">M</div>
<div class="t" style="left:198.4px;width:40px;text-align:center;top:412.94px;font-size:15px;color:#6a6a6a;font-family:'Liberation Serif',serif;transform:scaleX(0.92);-webkit-text-stroke:0.3px #6a6a6a;">F</div>
<div class="t" style="left:208.4px;width:40px;text-align:center;top:412.94px;font-size:15px;color:#6a6a6a;font-family:'Liberation Serif',serif;transform:scaleX(0.92);-webkit-text-stroke:0.3px #6a6a6a;">T</div>
<div class="t" style="left:218.6px;width:40px;text-align:center;top:412.94px;font-size:15px;color:#6a6a6a;font-family:'Liberation Serif',serif;transform:scaleX(1.0);-webkit-text-stroke:0.3px #6a6a6a;">#</div>
<div class="t" style="left:238.2px;width:40px;text-align:center;top:412.94px;font-size:15px;color:#6a6a6a;font-family:'Liberation Serif',serif;transform:scaleX(0.95);-webkit-text-stroke:0.3px #6a6a6a;">0</div>
<div class="r" style="left:115px;top:649px;width:680px;height:15px;background:#e9eaec;"></div>
<div class="r" style="left:115px;top:649px;width:299px;height:15px;background:#cdcdcd;"></div>
<div class="r" style="left:795px;top:380px;width:15px;height:284px;background:#ebebed;"></div>
<div class="r" style="left:795px;top:380px;width:15px;height:11px;background:#cacaca;"></div>
<svg style="left:0;top:0" width="820" height="706"><path d="M799.1,631.2 L802.6,627.4 L806.1,631.2 M799.1,654.3 L802.6,658.1 L806.1,654.3 M762.5,652.3 L758.7,656 L762.5,659.7 M785.5,652.3 L789.3,656 L785.5,659.7" fill="none" stroke="#4a4a4a" stroke-width="1.7"/></svg>
<div class="r" style="left:34px;top:664px;width:777px;height:1px;background:#c4c4c4;"></div>
<div class="r" style="left:34px;top:665px;width:777px;height:35px;background:#fdfdfd;"></div>
<div class="r" style="left:38px;top:674px;width:110px;height:20px;background:#ffffff;box-sizing:border-box;border:1px solid #cad2dc;"></div>
<div class="t" style="top:679.04px;font-size:12px;color:#5d6b80;font-weight:normal;letter-spacing:0px;left:-107.0px;width:400px;text-align:center;transform-origin:50% 0;transform:scaleX(0.9);">516</div>
<div class="r" style="left:153px;top:674px;width:110px;height:20px;background:#ffffff;box-sizing:border-box;border:1px solid #cad2dc;"></div>
<div class="t" style="top:679.04px;font-size:12px;color:#5d6b80;font-weight:normal;letter-spacing:0px;left:8.0px;width:400px;text-align:center;transform-origin:50% 0;transform:scaleX(0.9);">0</div>
<div class="r" style="left:268px;top:674px;width:110px;height:20px;background:#ffffff;box-sizing:border-box;border:1px solid #cad2dc;"></div>
<div class="t" style="top:679.04px;font-size:12px;color:#5d6b80;font-weight:normal;letter-spacing:0px;left:123.0px;width:400px;text-align:center;transform-origin:50% 0;transform:scaleX(0.9);">Data 1</div>
<div class="r" style="left:383px;top:674px;width:80px;height:20px;background:#ffffff;box-sizing:border-box;border:1px solid #cad2dc;"></div>
<div class="t" style="top:679.04px;font-size:12px;color:#5d6b80;font-weight:normal;letter-spacing:0px;left:223.0px;width:400px;text-align:center;transform-origin:50% 0;transform:scaleX(0.9);">16</div>
<div class="r" style="left:468px;top:674px;width:337px;height:20px;background:#ffffff;box-sizing:border-box;border:1px solid #cad2dc;"></div>
<div class="t" style="top:679.04px;font-size:12px;color:#5d6b80;font-weight:normal;letter-spacing:0px;left:471.5px;transform-origin:0 0;transform:scaleX(0.9);">Read from the storage; data component; redundancy check PASS...</div>
<div class="r" style="left:1px;top:700px;width:811px;height:1px;background:#cfcfcf;"></div>
<div class="r" style="left:1px;top:701px;width:811px;height:4px;background:#fafafa;"></div>
<div class="r" style="left:1px;top:705px;width:819px;height:1px;background:#c8c8c8;"></div>
<div class="r" style="left:656px;top:127px;width:163px;height:17px;background:#ffffff;box-sizing:border-box;border:1px solid #a8a8a8;"></div>
<div class="t" style="top:131.04px;font-size:12px;color:#6b737e;font-weight:normal;letter-spacing:0px;left:660px;transform-origin:0 0;transform:scaleX(0.9);">Data visualization mode (Ctrl+V)</div>
</body></html>
